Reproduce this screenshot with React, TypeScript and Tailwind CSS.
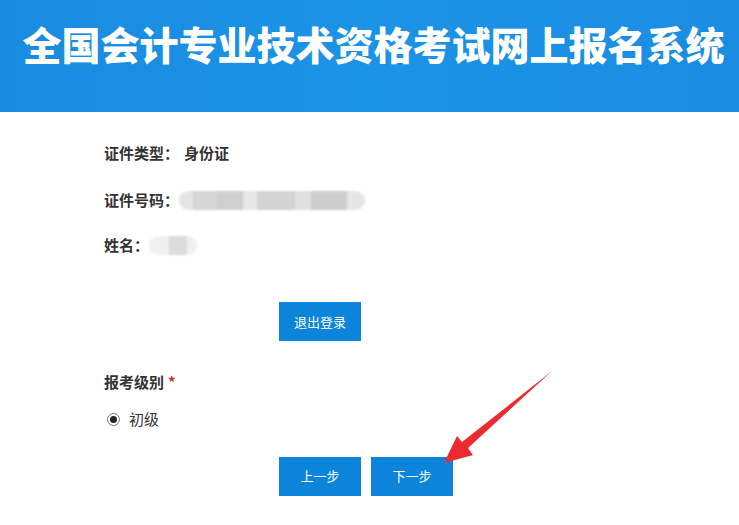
import React from 'react';

const cjk = { fontFamily: '"Microsoft YaHei", "Noto Sans CJK SC", sans-serif' };

function Blur({ widths }: { widths: { w: number; c: string }[] }) {
    return (
        <span className="inline-flex items-center h-[19px] rounded-full overflow-hidden blur-[1px]">
            {widths.map((b, i) => (
                <span key={i} className="h-full inline-block" style={{ width: b.w, background: b.c }} />
            ))}
        </span>
    );
}

export default function App() {
    return (
        <div className="relative w-[739px] h-[525px] bg-white overflow-hidden" style={cjk}>
            {/* Header banner */}
            <div className="h-[112px] bg-gradient-to-r from-[#1a8ce0] via-[#1b93e6] to-[#1a8de2] flex items-start justify-center pt-[18px] pl-[8px]">
                <h1 className="text-white text-[39px] font-black leading-[50px] whitespace-nowrap">
                    全国会计专业技术资格考试网上报名系统
                </h1>
            </div>

            <div className="pl-[104px] pt-[30px] text-[#333] text-[15px] font-bold">
                <div className="h-[22px] flex items-center">
                    证件类型：<span className="ml-[5px]">身份证</span>
                </div>
                <div className="h-[22px] flex items-center mt-[25px]">
                    证件号码：
                    <Blur
                        widths={[
                            { w: 14, c: '#e4e4e4' },
                            { w: 24, c: '#d6d6d6' },
                            { w: 26, c: '#cfcfcf' },
                            { w: 14, c: '#e8e8e8' },
                            { w: 38, c: '#d3d3d3' },
                            { w: 16, c: '#e0e0e0' },
                            { w: 36, c: '#cdcdcd' },
                            { w: 18, c: '#e6e6e6' },
                        ]}
                    />
                </div>
                <div className="h-[22px] flex items-center mt-[23px]">
                    姓名：
                    <Blur
                        widths={[
                            { w: 20, c: '#f0f0f0' },
                            { w: 18, c: '#dcdcdc' },
                            { w: 10, c: '#efefef' },
                        ]}
                    />
                </div>
            </div>

            <div className="pl-[279px] mt-[46px]">
                <button className="w-[82px] h-[39px] bg-[#0b84d9] text-white text-[13px]">退出登录</button>
            </div>

            <div className="pl-[104px] mt-[30px] text-[15px]">
                <div className="font-bold text-[#333] h-[22px] flex items-center">
                    报考级别 <span className="text-[#c9302c] ml-[4px]">*</span>
                </div>
                <label className="flex items-center mt-[15px] ml-[3px] text-[#333]">
                    <span className="w-[13px] h-[13px] rounded-full border border-[#777] flex items-center justify-center">
                        <span className="w-[7px] h-[7px] rounded-full bg-[#222]" />
                    </span>
                    <span className="ml-[9px]">初级</span>
                </label>
            </div>

            <div className="pl-[279px] mt-[26px] flex gap-[10px]">
                <button className="w-[82px] h-[39px] bg-[#0b84d9] text-white text-[13px]">上一步</button>
                <button className="w-[82px] h-[39px] bg-[#0b84d9] text-white text-[13px]">下一步</button>
            </div>

            {/* Red annotation arrow */}
            <svg className="absolute left-0 top-0" width="739" height="525" viewBox="0 0 739 525">
                <polygon
                    points="552,371 468,448 473,455 444,463 457,436 462,442"
                    fill="#ec2a2f"
                />
            </svg>
        </div>
    );
}
